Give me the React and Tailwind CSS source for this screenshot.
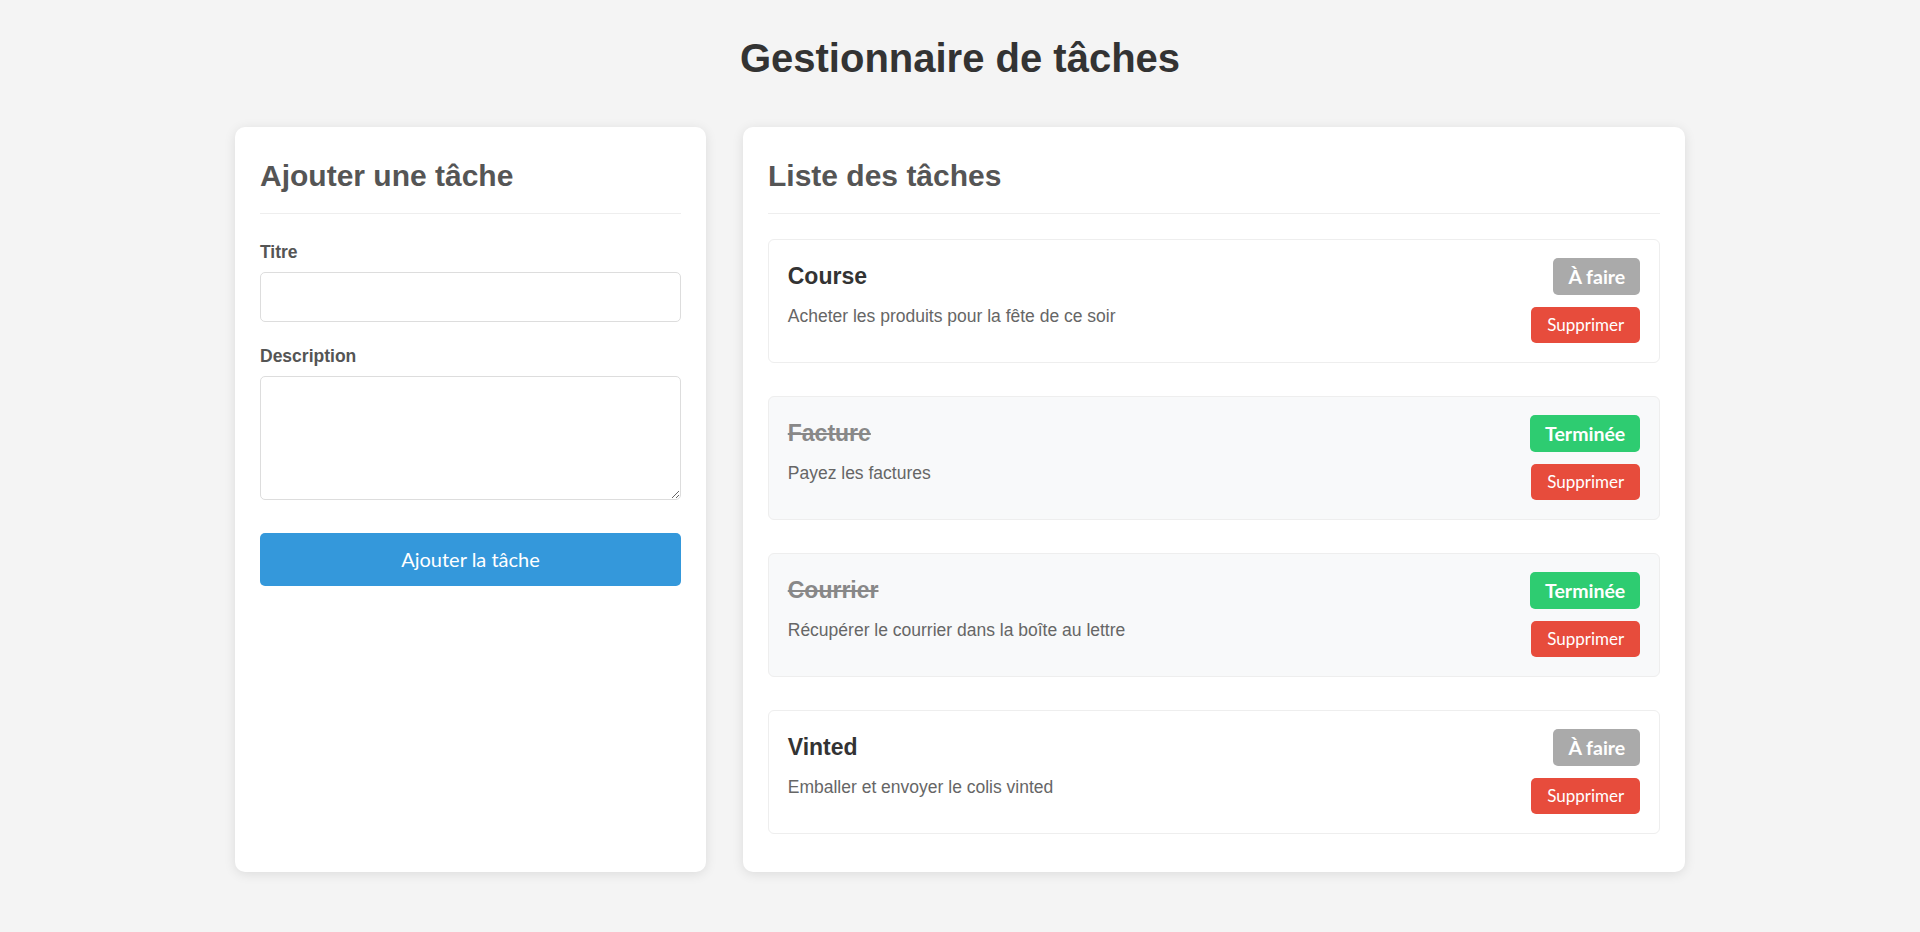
import React, { useState } from 'react';

const initialTasks = [
  { id: 1, title: 'Course', description: 'Acheter les produits pour la fête de ce soir', done: false },
  { id: 2, title: 'Facture', description: 'Payez les factures', done: true },
  { id: 3, title: 'Courrier', description: 'Récupérer le courrier dans la boîte au lettre', done: true },
  { id: 4, title: 'Vinted', description: 'Emballer et envoyer le colis vinted', done: false },
];

function TaskItem({ task, onToggle, onDelete }) {
  return (
    <div
      className={`flex justify-between items-start border border-[#eee] rounded-[6px] p-[18.75px] ${
        task.done ? 'bg-[#f8f9fa]' : 'bg-white'
      }`}
    >
      {/* Text */}
      <div>
        <h3
          className={`text-[23px] font-bold leading-[37px] mb-[7px] ${
            task.done ? 'line-through text-[#888]' : 'text-[#333]'
          }`}
        >
          {task.title}
        </h3>
        <p className="text-[17.5px] leading-[28px] text-[#666]">{task.description}</p>
      </div>

      {/* Actions */}
      <div className="flex flex-col items-end gap-[12px] font-['Lato',sans-serif]">
        <button
          onClick={() => onToggle(task.id)}
          className={`h-[36.5px] px-[15px] rounded-[5px] text-white font-bold text-[19.5px] ${
            task.done ? 'bg-[#2ecc71]' : 'bg-[#aaa]'
          }`}
        >
          {task.done ? 'Terminée' : 'À faire'}
        </button>
        <button
          onClick={() => onDelete(task.id)}
          className="h-[36.5px] px-[16px] rounded-[5px] bg-[#e74c3c] text-white text-[17px]"
        >
          Supprimer
        </button>
      </div>
    </div>
  );
}

export default function App() {
  const [tasks, setTasks] = useState(initialTasks);
  const [title, setTitle] = useState('');
  const [description, setDescription] = useState('');

  const addTask = (e) => {
    e.preventDefault();
    if (!title.trim()) return;
    setTasks([...tasks, { id: Date.now(), title, description, done: false }]);
    setTitle('');
    setDescription('');
  };

  const toggleTask = (id) =>
    setTasks(tasks.map((t) => (t.id === id ? { ...t, done: !t.done } : t)));

  const deleteTask = (id) => setTasks(tasks.filter((t) => t.id !== id));

  return (
    <div className="min-h-screen bg-[#f4f4f4] pt-[26px] pb-[25px] font-['Liberation_Sans',Arial,sans-serif] leading-[1.6]">
      <h1 className="text-center text-[40px] font-bold text-[#333] leading-[64px] mb-[37px]">
        Gestionnaire de tâches
      </h1>

      <div className="mx-auto w-[1450px] grid grid-cols-[471px_942px] gap-[37px]">
        {/* Add form */}
        <div className="bg-white rounded-[10px] p-[25px] shadow-[0_2px_12px_rgba(0,0,0,0.1)]">
          <h2 className="text-[30px] font-bold text-[#555] leading-[48px] pb-[12.5px] border-b border-[#eee] mb-[24px]">
            Ajouter une tâche
          </h2>
          <form onSubmit={addTask}>
            <div className="mb-[20px]">
              <label className="block text-[17.5px] font-bold text-[#555] leading-[28px] mb-[6px]">
                Titre
              </label>
              <input
                type="text"
                value={title}
                onChange={(e) => setTitle(e.target.value)}
                className="block w-full h-[50px] border border-[#ddd] rounded-[5px] px-[12.5px] text-[20px] outline-none"
              />
            </div>
            <div>
              <label className="block text-[17.5px] font-bold text-[#555] leading-[28px] mb-[6px]">
                Description
              </label>
              <textarea
                value={description}
                onChange={(e) => setDescription(e.target.value)}
                className="block w-full h-[124px] border border-[#ddd] rounded-[5px] px-[12.5px] py-[12.5px] text-[20px] outline-none"
              />
            </div>
            <button
              type="submit"
              className="mt-[33px] w-full h-[53.5px] bg-[#3498db] text-white rounded-[5px] text-[20px] font-['Lato',sans-serif]"
            >
              Ajouter la tâche
            </button>
          </form>
        </div>

        {/* Task list */}
        <div className="bg-white rounded-[10px] p-[25px] shadow-[0_2px_12px_rgba(0,0,0,0.1)]">
          <h2 className="text-[30px] font-bold text-[#555] leading-[48px] pb-[12.5px] border-b border-[#eee] mb-[25px]">
            Liste des tâches
          </h2>
          <div className="flex flex-col gap-[32.5px] pb-[12.5px]">
            {tasks.map((task) => (
              <TaskItem key={task.id} task={task} onToggle={toggleTask} onDelete={deleteTask} />
            ))}
          </div>
        </div>
      </div>
    </div>
  );
}
